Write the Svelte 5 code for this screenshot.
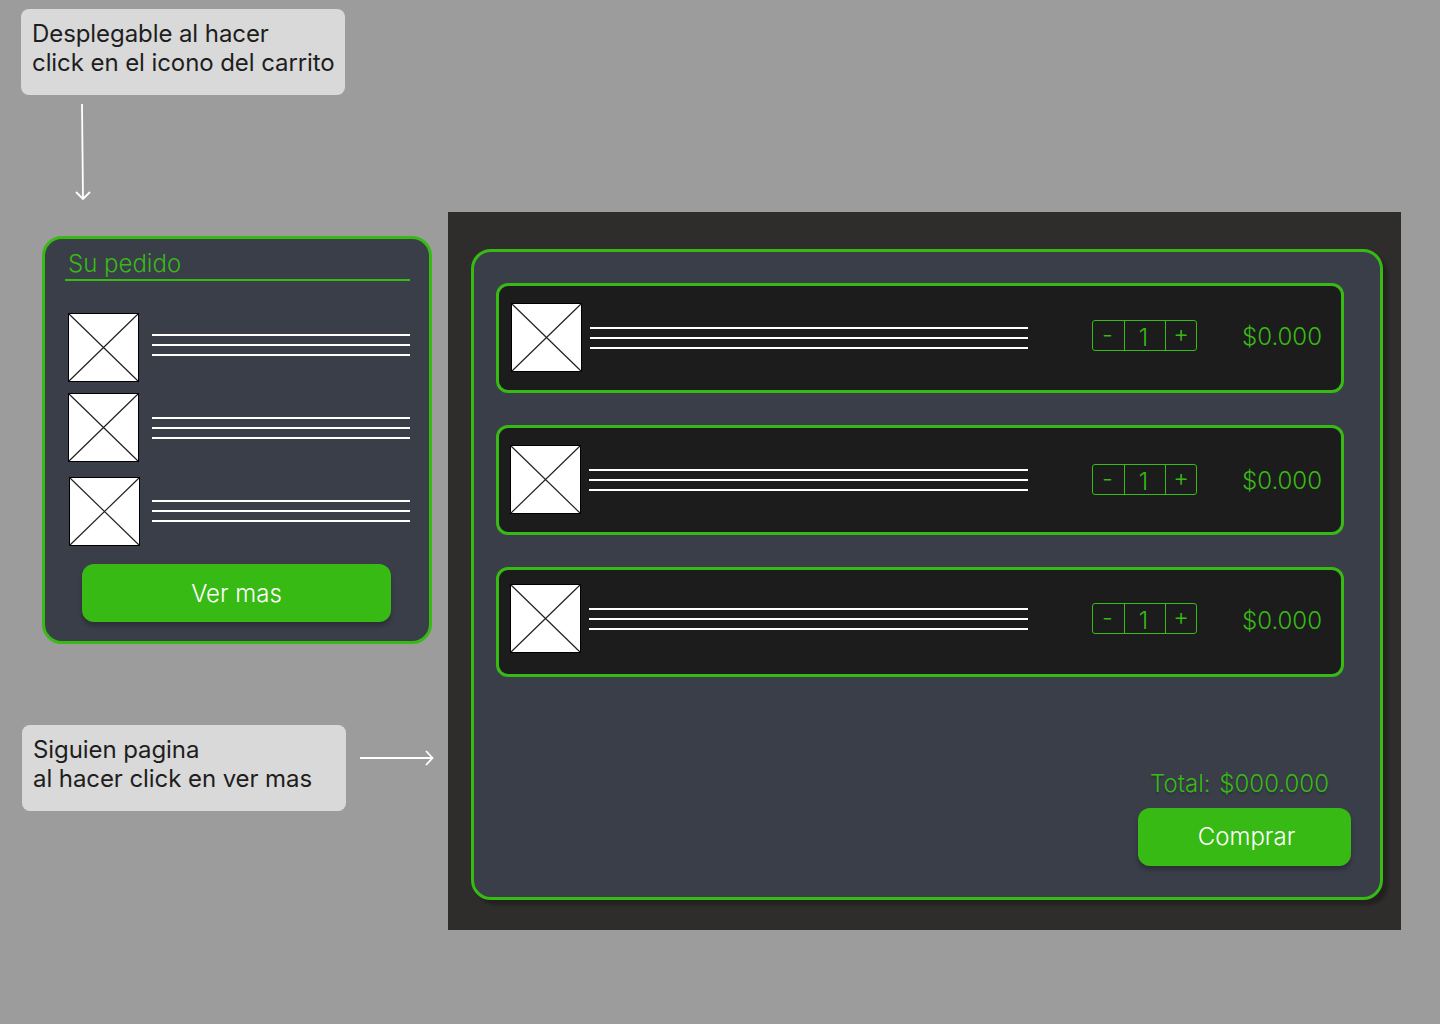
<script>
  const orderItems = [
    { top: 0, left: 0, lines: 21 },
    { top: 11, left: 0, lines: 24 },
    { top: 15, left: 1, lines: 23 }
  ];
  const cartItems = [
    { left: 12, thumb: 17, lines: 41, width: 438, step: 34, price: 36 },
    { left: 11, thumb: 17, lines: 41, width: 439, step: 36, price: 38 },
    { left: 11, thumb: 14, lines: 38, width: 439, step: 33, price: 36 }
  ];
</script>

{#snippet placeholder()}
  <svg class="thumb" viewBox="0 0 71 69" preserveAspectRatio="none">
    <rect x="0.5" y="0.5" width="70" height="68" fill="#fff" stroke="#000" />
    <path d="M1 1 70 68M70 1 1 68" stroke="#222" stroke-width="1.200" fill="none" />
  </svg>
{/snippet}

{#snippet lines()}
  <div class="lines"><i></i><i></i><i></i></div>
{/snippet}

<div class="canvas">
  <div class="note note-top">Desplegable al hacer<br />click en el icono del carrito</div>
  <svg class="arrow arrow-down" viewBox="0 0 20 100">
    <path d="M8 0 9 95M2 88 9 95 16 88" stroke="#fff" stroke-width="1.800" fill="none" />
  </svg>

  <section class="order">
    <h2>Su pedido</h2>
    <ul>
      {#each orderItems as item}
        <li style="margin-top: {item.top}px; padding-left: {item.left}px">
          {@render placeholder()}
          <div class="order-lines" style="margin-left: {13 - item.left}px; margin-top: {item.lines}px">
            {@render lines()}
          </div>
        </li>
      {/each}
    </ul>
    <button class="cta more">Ver mas</button>
  </section>

  <div class="note note-bottom">Siguien pagina<br />al hacer click en ver mas</div>
  <svg class="arrow arrow-right" viewBox="0 0 76 16">
    <path d="M0 8H72M66 1 72.500 8 66 15" stroke="#fff" stroke-width="1.800" fill="none" />
  </svg>

  <div class="screen">
    <section class="cart">
      {#each cartItems as item}
        <article class="row" style="padding-left: {item.left}px">
          <div style="margin-top: {item.thumb}px">{@render placeholder()}</div>
          <div class="row-lines" style="width: {item.width}px; margin-top: {item.lines}px">{@render lines()}</div>
          <div class="stepper" style="margin-top: {item.step}px">
            <span class="dec">-</span>
            <span class="qty">1</span>
            <span class="inc">+</span>
          </div>
          <div class="price" style="margin-top: {item.price}px">$0.000</div>
        </article>
      {/each}
      <div class="total">Total: $000.000</div>
      <button class="cta buy">Comprar</button>
    </section>
  </div>
</div>

<style>
  :global(body) {
    background: #9c9c9c;
  }
  .canvas {
    position: relative;
    width: 1440px;
    height: 1024px;
    overflow: hidden;
    background: #9c9c9c;
    font-family: Inter, "Liberation Sans", sans-serif;
    font-size: 24px;
    font-weight: 340;
    color: #37ba14;
  }
  .note {
    position: absolute;
    box-sizing: border-box;
    width: 324px;
    height: 86px;
    padding: 10px 11px;
    border-radius: 8px;
    background: #d9d9d9;
    color: #1e1e1e;
    font-weight: 400;
    line-height: 29px;
    letter-spacing: -0.08px;
    white-space: nowrap;
  }
  .note-top {
    left: 21px;
    top: 9px;
  }
  .note-bottom {
    left: 22px;
    top: 725px;
  }
  .arrow {
    position: absolute;
    display: block;
  }
  .arrow-down {
    left: 74px;
    top: 104px;
    width: 20px;
    height: 100px;
  }
  .arrow-right {
    left: 360px;
    top: 750px;
    width: 76px;
    height: 16px;
  }
  .thumb {
    display: block;
    width: 71px;
    height: 69px;
    flex: none;
  }
  .lines {
    display: flex;
    flex-direction: column;
    gap: 8px;
  }
  .lines i {
    display: block;
    height: 2px;
    background: #fff;
  }
  .order {
    position: absolute;
    left: 42px;
    top: 236px;
    box-sizing: border-box;
    width: 390px;
    height: 408px;
    padding: 0 19px 0 20px;
    border: 3px solid #37ba14;
    border-radius: 20px;
    background: #3a3e49;
  }
  h2 {
    margin: 0;
    padding: 0 0 0 3px;
    height: 42px;
    box-sizing: border-box;
    border-bottom: 2px solid #37ba14;
    font-size: 24px;
    font-weight: inherit;
    line-height: 49px;
  }
  ul {
    margin: 32px 0 0;
    padding: 0 0 0 3px;
    list-style: none;
  }
  li {
    display: flex;
  }
  .order-lines {
    width: 258px;
  }
  .cta {
    display: block;
    height: 58px;
    padding: 0;
    border: 0;
    border-radius: 12px;
    background: #37ba14;
    color: #fff;
    font: inherit;
    box-shadow: 0 4px 4px rgba(0, 0, 0, 0.25);
  }
  .more {
    width: 309px;
    margin: 18px 0 0 17px;
  }
  .screen {
    position: absolute;
    left: 448px;
    top: 212px;
    box-sizing: border-box;
    width: 953px;
    height: 718px;
    padding: 37px 18px 30px 23px;
    background: #2f2d2b;
  }
  .cart {
    box-sizing: border-box;
    height: 651px;
    padding: 31px 36px 0 22px;
    display: flex;
    flex-direction: column;
    gap: 32px;
    border: 3px solid #37ba14;
    border-radius: 20px;
    background: #3a3e49;
    box-shadow: 5px 5px 3px rgba(0, 0, 0, 0.25);
  }
  .row {
    display: flex;
    box-sizing: border-box;
    height: 110px;
    flex: none;
    border: 3px solid #37ba14;
    border-radius: 12px;
    background: #1c1c1c;
  }
  .row-lines {
    margin-left: 8px;
  }
  .stepper {
    display: flex;
    box-sizing: border-box;
    width: 105px;
    height: 31px;
    margin-left: 64px;
    border: 1px solid #37ba14;
    border-radius: 3px;
    text-align: center;
  }
  .stepper span {
    display: block;
    box-sizing: border-box;
  }
  .dec {
    width: 31px;
    padding-right: 2px;
    line-height: 27px;
  }
  .qty {
    width: 42px;
    padding-right: 3px;
    border-left: 1px solid #37ba14;
    border-right: 1px solid #37ba14;
    line-height: 33px;
  }
  .inc {
    width: 30px;
    line-height: 25px;
  }
  .price {
    margin-left: 45px;
    line-height: 29px;
  }
  .total {
    margin-top: 60px;
    margin-right: 15px;
    text-align: right;
    line-height: 29px;
    word-spacing: 2px;
    text-shadow: 0 2px 2px rgba(0, 0, 0, 0.25);
  }
  .buy {
    width: 213px;
    margin: -22px -7px 0 auto;
    padding: 0 0 2px 4px;
  }
</style>
